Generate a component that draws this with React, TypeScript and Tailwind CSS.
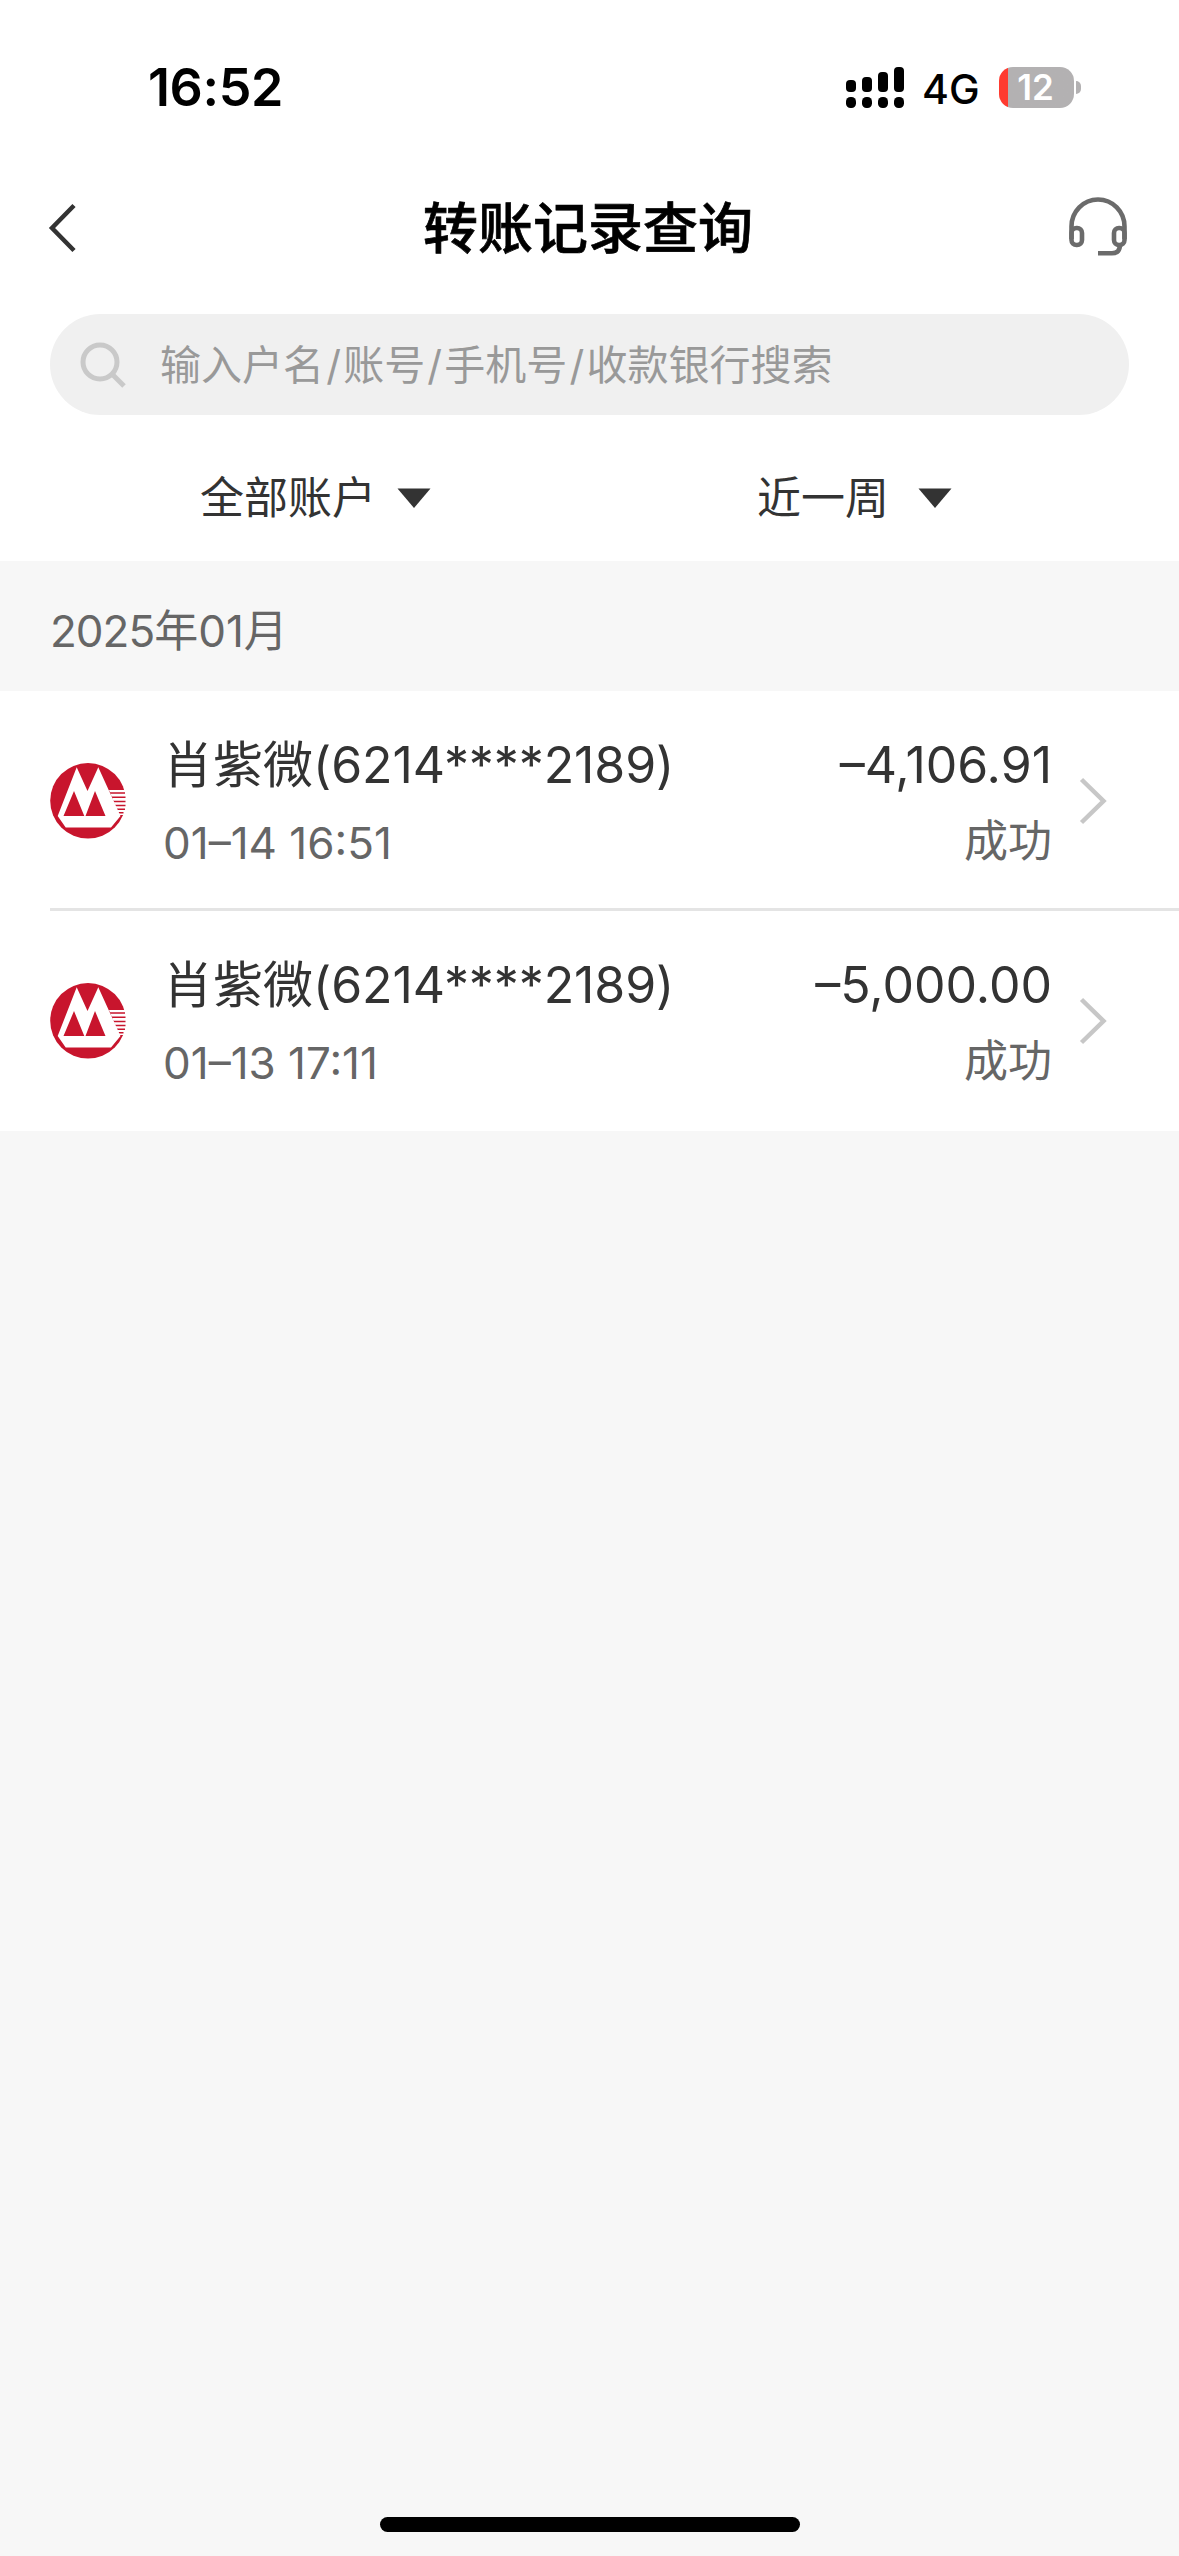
import React from 'react';

interface Transfer {
  id: number;
  payee: string;
  account: string;
  time: string;
  amount: string;
  status: string;
}

const transfers: Transfer[] = [
  { id: 1, payee: '肖紫微', account: '(6214****2189)', time: '01–14 16:51', amount: '–4,106.91', status: '成功' },
  { id: 2, payee: '肖紫微', account: '(6214****2189)', time: '01–13 17:11', amount: '–5,000.00', status: '成功' },
];

const signalBars = ['h-[12px]', 'h-[15px]', 'h-[20px]', 'h-[25px]'];

const searchHints = ['输入户名', '账号', '手机号', '收款银行搜索'];

const StatusBar: React.FC = () => (
  <div className="flex h-[176px] items-start justify-between pl-[148px] pr-[98px]">
    <span className="mt-[57px] text-[52px] leading-[62px] font-semibold tracking-[-0.4px] text-black">16:52</span>
    <div className="mt-[67px] flex h-[41px] items-center">
      <div className="flex h-[41px] items-end gap-[6px]">
        {signalBars.map((height) => (
          <div key={height} className="flex flex-col gap-[5px]">
            <div className={`w-[10px] rounded-[4px] bg-black ${height}`} />
            <div className="h-[11px] w-[10px] rounded-[4.5px] bg-black" />
          </div>
        ))}
      </div>
      <span className="mt-[3px] ml-[18px] w-[76px] text-[41px] leading-[41px] font-medium text-black">4G</span>
      <div className="ml-[1px] flex h-[41px] w-[75px] items-center justify-center overflow-hidden rounded-[14px] bg-linear-to-r from-[#ff3b30] from-[9px] to-[#b3b1b2] to-[9px]">
        <span className="mr-[2px] text-[35px] leading-[41px] font-semibold text-white">12</span>
      </div>
      <div className="ml-[2px] h-[13px] w-[5px] rounded-r-full bg-[#b3b1b2]" />
    </div>
  </div>
);

const HeadsetIcon: React.FC = () => (
  <svg className="mb-[4px] h-[60px] w-[60px]" viewBox="0 0 60 60" fill="none" stroke="#6b6b6b" strokeWidth="4.6">
    <path d="M3.5 43V30.500a26.500 27 0 0 1 53 0V43" />
    <rect x="3.500" y="32" width="10.500" height="17" rx="5" />
    <rect x="46" y="32" width="10.500" height="17" rx="5" />
    <path d="M52 48c0 6.500-2.500 9.300-8 9.300H30" />
  </svg>
);

const BankLogo: React.FC = () => (
  <svg className="h-[76px] w-[76px]" viewBox="0 0 76 76">
    <circle cx="38" cy="37.800" r="37.800" fill="#c8152d" />
    <path d="M59 27H76V52H69Z" fill="#fff" />
    <path
      d="M60 30H75M61.500 34.200H75.500M63 38.400H75.500M64.500 42.400H75.500M66 46.200H75M67.500 49.800H73.500"
      stroke="#c8152d"
      strokeWidth="1.500"
    />
    <path d="M26.700 4.300L37.500 28L48.300 4.300L70.500 53L61 64.500H15.700L7.700 53Z" fill="#fff" />
    <path d="M24 28L34.300 53H13.500ZM45 28L55.500 53H35.500Z" fill="#c8152d" />
  </svg>
);

const Caret: React.FC = () => (
  <svg className="h-[20px] w-[34px]" viewBox="0 0 34 20">
    <path d="M0.500 0.500H33.500L17 20Z" fill="#333" />
  </svg>
);

const TransferRow: React.FC<{ item: Transfer; last: boolean }> = ({ item, last }) => (
  <div className={`ml-[50px] flex h-[220px] border-b-[3px] pr-[72px] ${last ? 'border-transparent' : 'border-[#e4e4e4]'}`}>
    <div className="mt-[72px]">
      <BankLogo />
    </div>
    <div className="ml-[37px] flex-1">
      <div className="mt-[44px] flex h-[60px] items-center justify-between text-[50px] leading-[60px] text-[#333]">
        <span className="whitespace-nowrap">
          {item.payee}
          <span className="tracking-[-0.1px]">{item.account}</span>
        </span>
        <span>{item.amount}</span>
      </div>
      <div className="mt-[21px] flex h-[54px] items-center justify-between text-[44px] leading-[54px] text-[#666]">
        <span>{item.time}</span>
        <span className="mb-[4px]">{item.status}</span>
      </div>
    </div>
    <svg className="mt-[86px] ml-[27px] h-[48px] w-[28px]" viewBox="0 0 28 48" fill="none" stroke="#c7c7c7" strokeWidth="4.500">
      <path d="M2.500 2.500L24.500 24L2.500 45.500" />
    </svg>
  </div>
);

const App: React.FC = () => {
  return (
    <div className="flex h-[2556px] w-[1179px] flex-col bg-[#f7f7f7] font-['Inter','Noto_Sans_CJK_SC',sans-serif]">
      <header className="bg-white">
        <StatusBar />

        {/* Title bar */}
        <div className="flex h-[104px] items-center justify-between pr-[51px] pl-[48px]">
          <svg className="h-[50px] w-[60px]" viewBox="0 0 60 50" fill="none" stroke="#333" strokeWidth="4.500">
            <path d="M26 2.500L4 25L26 47.500" />
          </svg>
          <h1 className="text-[55px] leading-[80px] font-medium text-black [-webkit-text-stroke:0.7px_black]">转账记录查询</h1>
          <HeadsetIcon />
        </div>

        {/* Search */}
        <div className="mx-[50px] mt-[34px] flex h-[101px] items-center rounded-full bg-[#f0f0f0] pl-[30px]">
          <svg className="h-[46px] w-[46px]" viewBox="0 0 46 46" fill="none" stroke="#c9c9c9" strokeWidth="5">
            <circle cx="20" cy="20" r="17" />
            <path d="M32 32L44 44" />
          </svg>
          <span className="ml-[34px] text-[41px] leading-[60px] text-[#999]">
            {searchHints.map((hint, index) => (
              <React.Fragment key={hint}>
                {index > 0 && <span className="mx-[2.2px]">/</span>}
                {hint}
              </React.Fragment>
            ))}
          </span>
        </div>

        {/* Filters */}
        <div className="flex h-[146px] items-center pt-[20px] text-[44px] leading-[60px] text-[#333]">
          <div className="ml-[200px] flex w-[557px] items-center gap-[21px]">
            <span>全部账户</span>
            <Caret />
          </div>
          <div className="flex items-center gap-[29px]">
            <span>近一周</span>
            <Caret />
          </div>
        </div>
      </header>

      <div className="flex h-[130px] items-center pt-[9px] pl-[50px] text-[44px] leading-[60px] text-[#666]">
        <span className="tracking-[-1px]">2025</span>年<span>01</span>月
      </div>

      <div className="bg-white">
        {transfers.map((item, index) => (
          <TransferRow key={item.id} item={item} last={index === transfers.length - 1} />
        ))}
      </div>

      {/* Home indicator */}
      <div className="mx-auto mt-auto mb-[24px] h-[15px] w-[420px] rounded-full bg-black" />
    </div>
  );
};

export default App;
